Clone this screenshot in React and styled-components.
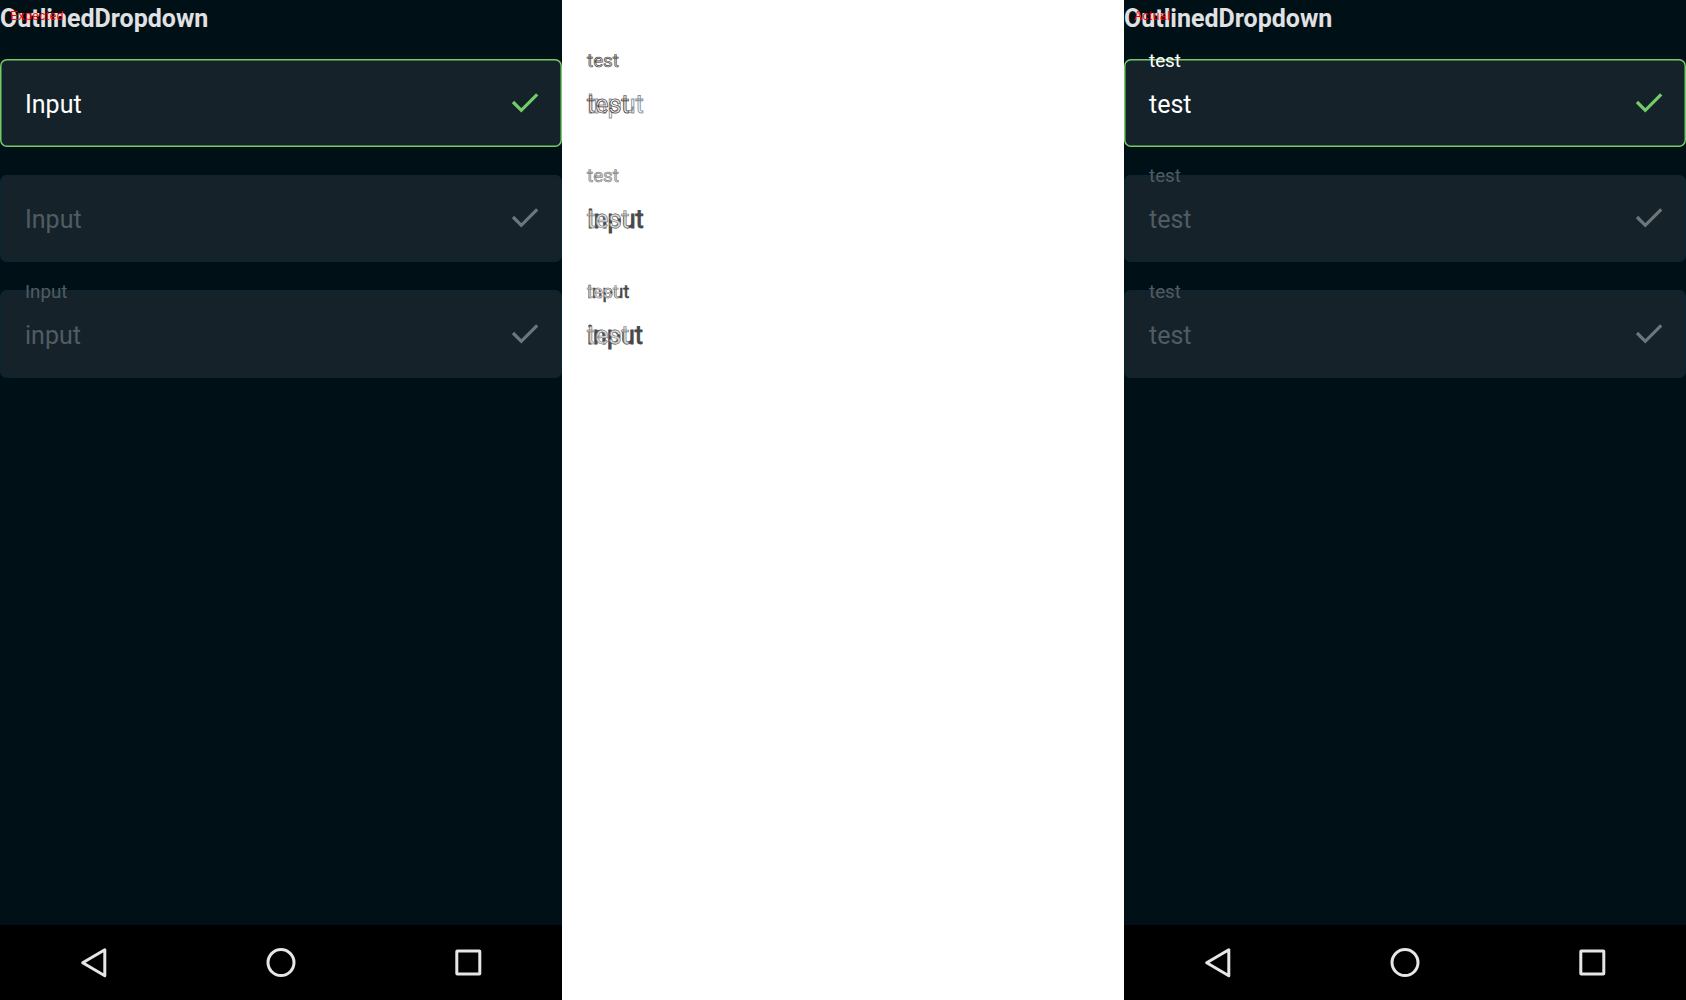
import React from "react";
import styled, { createGlobalStyle } from "styled-components";

const GlobalStyle = createGlobalStyle`
  * { box-sizing: border-box; }
  body { margin: 0; background: #fff; overflow: hidden; }
`;

const Page = styled.main`
  display: grid;
  grid-template-columns: repeat(3, 562px);
  height: 1000px;
  font-family: Roboto, "Noto Sans", sans-serif;
`;

const Screen = styled.section`
  position: relative;
  display: flex;
  flex-direction: column;
  background: ${(p) => (p.$light ? "#fff" : "#001017")};
`;

const Caption = styled.span`
  position: absolute;
  left: 10px;
  top: 9px;
  color: #f00;
  font: 12px/14px "Liberation Sans", Arial, sans-serif;
  letter-spacing: 0.5px;
`;

const Title = styled.h1`
  margin: 0;
  height: 59px;
  padding-top: 3.5px;
  color: #e0e1e2;
  font-size: 25px;
  line-height: 29px;
  font-weight: 700;
`;

const Fields = styled.div`
  flex: 1;
  display: flex;
  flex-direction: column;
  gap: 28.125px;
  padding-top: ${(p) => (p.$offset ? "59px" : "0")};
`;

const Field = styled.div`
  position: relative;
  display: flex;
  align-items: center;
  justify-content: space-between;
  height: 87.5px;
  padding: 0 18.5px 0 25px;
  border-radius: 7px;
  color: ${(p) => (p.$active ? "#fff" : "#505c63")};
  background: ${(p) => (p.$plain ? "transparent" : "#162229")};
  box-shadow: ${(p) =>
    p.$plain ? "none" : `inset 0 0 0 1.5px ${p.$active ? "#73cc69" : "#0b2532"}`};
`;

const Value = styled.span`
  font-size: 25px;
  line-height: 29px;
  padding-top: 3px;
`;

const Label = styled.span`
  position: absolute;
  left: 25px;
  top: -9.2px;
  font-size: 18.75px;
  line-height: 22px;
`;

const CheckSvg = styled.svg`
  width: 38px;
  height: 38px;
  fill: none;
  stroke: ${(p) => (p.$active ? "#73cc69" : "#6d767b")};
  stroke-width: 3.2;
`;

const Stack = styled.span`
  position: ${(p) => (p.$label ? "absolute" : "static")};
  left: 25px;
  top: -9.2px;
  display: grid;
  font-size: ${(p) => (p.$label ? "18.75px" : "25px")};
  line-height: ${(p) => (p.$label ? "22px" : "29px")};
  padding-top: ${(p) => (p.$label ? "0" : "3px")};
`;

const Layer = styled.span`
  grid-area: 1 / 1;
  color: ${(p) => p.$fill};
  -webkit-text-stroke: ${(p) => p.$width || 0}px ${(p) => p.$edge || "transparent"};
`;

const NavBar = styled.nav`
  display: grid;
  grid-template-columns: repeat(3, 1fr);
  place-items: center;
  height: 75px;
  background: #000;
`;

const NavSvg = styled.svg`
  width: 38px;
  height: 38px;
  fill: none;
  stroke: #e6e6e6;
  stroke-width: 3;
  stroke-linejoin: round;
`;

const Check = ({ active }) => (
  <CheckSvg viewBox="0 0 38 38" $active={active}>
    <path d="M7 18 15.3 26.3 31.2 10.4" />
  </CheckSvg>
);

const Phone = ({ caption, fields }) => (
  <Screen>
    <Title>OutlinedDropdown</Title>
    <Caption>{caption}</Caption>
    <Fields>
      {fields.map((f, i) => (
        <Field key={i} $active={i === 0}>
          {f.label && <Label>{f.label}</Label>}
          <Value>{f.value}</Value>
          <Check active={i === 0} />
        </Field>
      ))}
    </Fields>
    <NavBar>
      <NavSvg viewBox="0 0 38 38"><path d="M29.8 5.7v26L7.7 18.7Z" /></NavSvg>
      <NavSvg viewBox="0 0 38 38"><circle cx="19" cy="18.6" r="13" /></NavSvg>
      <NavSvg viewBox="0 0 38 38"><rect x="7.8" y="7" width="23" height="23" rx="0.5" /></NavSvg>
    </NavBar>
  </Screen>
);

const expected = [{ value: "Input" }, { value: "Input" }, { label: "Input", value: "input" }];
const actual = Array.from({ length: 3 }, () => ({ label: "test", value: "test" }));

const differences = [
  {
    label: [{ text: "test", fill: "#d4cfcd", edge: "#453d3b", width: 0.65 }],
    value: [
      { text: "Input", fill: "#fff", edge: "#87919a", width: 0.9 },
      { text: "test", fill: "#f0eeee", edge: "#40302d", width: 0.65 },
    ],
  },
  {
    label: [{ text: "test", fill: "#d0d0d0", edge: "#888", width: 0.7 }],
    value: [
      { text: "Input", fill: "#484848", edge: "#484848", width: 0.9 },
      { text: "test", fill: "#e4e4e4", edge: "#808080", width: 0.7 },
    ],
  },
  {
    label: [
      { text: "Input", fill: "#484848", edge: "#484848", width: 0.5 },
      { text: "test", fill: "#d8d8d8", edge: "#888", width: 0.5 },
    ],
    value: [
      { text: "input", fill: "#484848", edge: "#484848", width: 0.9 },
      { text: "test", fill: "#e4e4e4", edge: "#808080", width: 0.7 },
    ],
  },
];

const Layers = ({ items, label }) => (
  <Stack $label={label}>
    {items.map((l) => (
      <Layer key={l.text} $fill={l.fill} $edge={l.edge} $width={l.width}>{l.text}</Layer>
    ))}
  </Stack>
);

export default function App() {
  return (
    <>
      <GlobalStyle />
      <Page>
        <Phone caption="Expected" fields={expected} />
        <Screen $light>
          <Fields $offset>
            {differences.map((d, i) => (
              <Field key={i} $plain>
                <Layers items={d.label} label />
                <Layers items={d.value} />
              </Field>
            ))}
          </Fields>
        </Screen>
        <Phone caption="Actual" fields={actual} />
      </Page>
    </>
  );
}
